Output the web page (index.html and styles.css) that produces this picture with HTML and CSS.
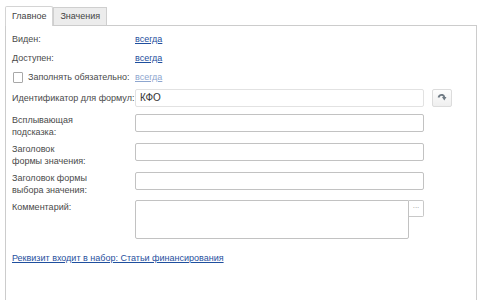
FILE: index.html
```html
<!DOCTYPE html>
<html lang="ru">
<head>
    <meta charset="UTF-8">
    <title>Реквизит</title>
    <link rel="stylesheet" href="styles.css">
</head>
<body>
    <div class="tabs">
        <div class="tab active">Главное</div>
        <div class="tab">Значения</div>
    </div>
    <div class="panel">
        <div class="row r1">
            <div class="label">Виден:</div>
            <a href="#" class="link">всегда</a>
        </div>
        <div class="row r2">
            <div class="label">Доступен:</div>
            <a href="#" class="link">всегда</a>
        </div>
        <div class="row r3">
            <div class="label check-label"><span class="checkbox"></span>Заполнять обязательно:</div>
            <a href="#" class="link disabled">всегда</a>
        </div>
        <div class="row r4">
            <div class="label">Идентификатор для формул:</div>
            <div class="input light">КФО</div>
            <div class="btn">
                <svg width="10" height="10" viewBox="0 0 10 10"><path d="M1.5 4.5 Q2.5 1.5 5.5 2 Q7 2.3 7.3 4.2" stroke="#6f7a84" stroke-width="1.8" fill="none"/><path d="M5 4 L9.5 4 L7.3 7.5 Z" fill="#6f7a84"/></svg>
            </div>
        </div>
        <div class="row r5 top">
            <div class="label">Всплывающая<br>подсказка:</div>
            <div class="input"></div>
        </div>
        <div class="row r6 top">
            <div class="label">Заголовок<br>формы значения:</div>
            <div class="input"></div>
        </div>
        <div class="row r7 top">
            <div class="label">Заголовок формы<br>выбора значения:</div>
            <div class="input"></div>
        </div>
        <div class="row r8 top">
            <div class="label">Комментарий:</div>
            <div class="textarea"></div>
            <div class="dots">...</div>
        </div>
        <div class="footer">
            <a href="#" class="link">Реквизит входит в набор: Статьи финансирования</a>
        </div>
    </div>
</body>
</html>
```

FILE: styles.css
```css
body { margin: 0; background: #fff; font-family: "Liberation Sans", Arial, sans-serif; font-size: 9px; color: #4a4a4a; }
.tabs { display: flex; align-items: flex-end; padding: 5px 0 0 5px; height: 20px; }
.tab { box-sizing: border-box; height: 18px; padding: 0 6px; line-height: 17px; border: 1px solid #cfcfcf; border-bottom: none; background: #ececec; color: #444; }
.tab.active { height: 20px; line-height: 19px; background: #fff; border-color: #d4d4d4; border-radius: 2px 2px 0 0; margin-bottom: -1px; position: relative; z-index: 1; }
.panel { margin-left: 5px; width: 472px; height: 290px; border: 1px solid #cccccc; padding: 4px 0 0 6px; box-sizing: border-box; }
.row { display: flex; align-items: center; min-height: 18px; }
.row.top { align-items: flex-start; }
.label { width: 123px; flex: none; line-height: 12px; white-space: nowrap; }
.r2, .r3 { margin-top: 1px; }
.r4 { margin-top: 3px; }
.r5 { margin-top: 7px; }
.r6, .r7 { margin-top: 5px; }
.r8 { margin-top: 4px; }
.r8 .label { padding-top: 1px; }
.check-label { display: flex; align-items: center; margin-left: 1px; width: 122px; }
.checkbox { box-sizing: border-box; width: 10px; height: 11px; border: 1px solid #a8a8a8; border-radius: 1px; margin-right: 5px; background: #fff; }
.link { color: #1f4f9e; text-decoration: underline; }
.link.disabled { color: #8ea6cf; }
.input { box-sizing: border-box; width: 289px; height: 18px; border: 1px solid #c2c2c2; border-radius: 2px; padding: 0 4px; line-height: 16px; color: #333; font-size: 10px; }
.input.light { border-color: #e2e2e2; }
.btn { box-sizing: border-box; width: 20px; height: 18px; margin-left: 8px; border: 1px solid #dcdcdc; border-radius: 2px; background: linear-gradient(#fdfdfd, #efefef); display: flex; align-items: center; justify-content: center; }
.textarea { box-sizing: border-box; width: 274px; height: 39px; border: 1px solid #c2c2c2; border-radius: 2px 0 2px 2px; }
.dots { box-sizing: border-box; width: 15px; height: 17px; border: 1px solid #c8c8c8; border-left: none; border-radius: 0 2px 2px 0; font-size: 8px; color: #999; text-align: center; line-height: 10px; }
.footer { margin-top: 13px; line-height: 12px; }
```
